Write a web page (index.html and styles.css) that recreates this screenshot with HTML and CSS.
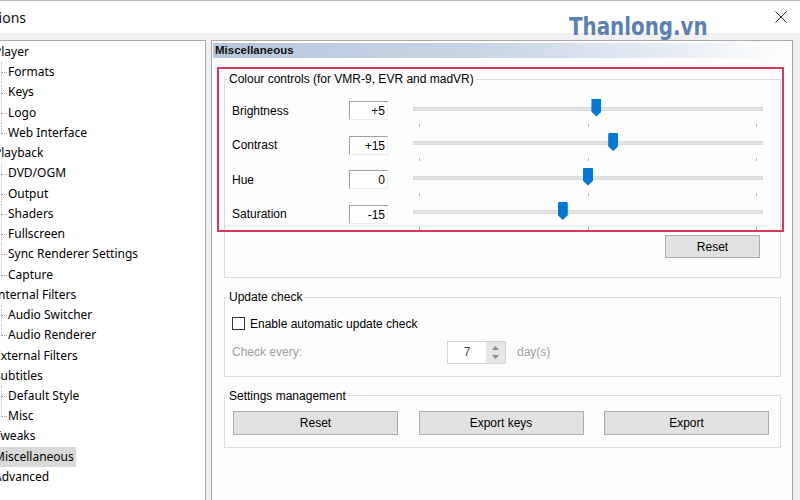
FILE: index.html
```html
<!DOCTYPE html>
<html lang="en">
<head>
<meta charset="utf-8">
<title>Options</title>
<link rel="stylesheet" href="styles.css">
</head>
<body>
<div class="window">
  <header class="titlebar">
    <span class="title">Options</span>
    <span class="logo">Thanlong.vn</span>
    <svg class="close" width="12" height="12" viewBox="0 0 12 12" aria-label="Close">
      <path d="M0.5 0.5 L11.5 11.5 M11.5 0.5 L0.5 11.5" stroke="#222" stroke-width="1" fill="none"/>
    </svg>
  </header>

  <div class="main">
    <nav class="tree">
      <div class="item top"><span class="txt">Player</span></div>
      <div class="item child"><span class="txt">Formats</span></div>
      <div class="item child"><span class="txt">Keys</span></div>
      <div class="item child"><span class="txt">Logo</span></div>
      <div class="item child last"><span class="txt">Web Interface</span></div>
      <div class="item top"><span class="txt">Playback</span></div>
      <div class="item child"><span class="txt">DVD/OGM</span></div>
      <div class="item child"><span class="txt">Output</span></div>
      <div class="item child"><span class="txt">Shaders</span></div>
      <div class="item child"><span class="txt">Fullscreen</span></div>
      <div class="item child"><span class="txt">Sync Renderer Settings</span></div>
      <div class="item child last"><span class="txt">Capture</span></div>
      <div class="item top"><span class="txt">Internal Filters</span></div>
      <div class="item child"><span class="txt">Audio Switcher</span></div>
      <div class="item child last"><span class="txt">Audio Renderer</span></div>
      <div class="item top"><span class="txt">External Filters</span></div>
      <div class="item top"><span class="txt">Subtitles</span></div>
      <div class="item child"><span class="txt">Default Style</span></div>
      <div class="item child last"><span class="txt">Misc</span></div>
      <div class="item top"><span class="txt">Tweaks</span></div>
      <div class="item top selected"><span class="txt">Miscellaneous</span></div>
      <div class="item top"><span class="txt">Advanced</span></div>
    </nav>

    <section class="panel">
      <div class="panel-head">Miscellaneous</div>

      <fieldset class="group colour">
        <legend>Colour controls (for VMR-9, EVR and madVR)</legend>
        <div class="body">
          <div class="rows">
            <div class="row">
              <span class="lbl">Brightness</span>
              <span class="edit">+5</span>
              <div class="slider">
                <div class="track"><div class="range"><span class="thumb" style="left: 52.5%"></span></div></div>
                <div class="ticks"><i></i><i></i><i></i></div>
              </div>
            </div>
            <div class="row">
              <span class="lbl">Contrast</span>
              <span class="edit">+15</span>
              <div class="slider">
                <div class="track"><div class="range"><span class="thumb" style="left: 57.5%"></span></div></div>
                <div class="ticks"><i></i><i></i><i></i></div>
              </div>
            </div>
            <div class="row">
              <span class="lbl">Hue</span>
              <span class="edit">0</span>
              <div class="slider">
                <div class="track"><div class="range"><span class="thumb" style="left: 50%"></span></div></div>
                <div class="ticks"><i></i><i></i><i></i></div>
              </div>
            </div>
            <div class="row">
              <span class="lbl">Saturation</span>
              <span class="edit">-15</span>
              <div class="slider">
                <div class="track"><div class="range"><span class="thumb" style="left: 42.5%"></span></div></div>
                <div class="ticks"><i></i><i></i><i></i></div>
              </div>
            </div>
          </div>
          <div class="reset-row"><button class="btn small">Reset</button></div>
        </div>
      </fieldset>

      <fieldset class="group update">
        <legend>Update check</legend>
        <div class="body">
          <div class="check-row">
            <span class="checkbox"></span>
            <span>Enable automatic update check</span>
          </div>
          <div class="every-row">
            <span class="dim every">Check every:</span>
            <span class="spinner">
              <span class="spin-val">7</span>
              <span class="spin-btns">
                <svg width="7" height="4" viewBox="0 0 7 4"><path d="M0 4 L3.5 0 L7 4 Z" fill="#8a8a8a"/></svg>
                <svg width="7" height="4" viewBox="0 0 7 4"><path d="M0 0 L3.5 4 L7 0 Z" fill="#8a8a8a"/></svg>
              </span>
            </span>
            <span class="dim days">day(s)</span>
          </div>
        </div>
      </fieldset>

      <fieldset class="group settings">
        <legend>Settings management</legend>
        <div class="body">
          <div class="btn-grid">
            <button class="btn">Reset</button>
            <button class="btn">Export keys</button>
            <button class="btn">Export</button>
          </div>
        </div>
      </fieldset>

      <div class="highlight"></div>
    </section>
  </div>
</div>
</body>
</html>
```

FILE: styles.css
```css
* { box-sizing: border-box; }

html, body {
  margin: 0;
  padding: 0;
}

body {
  width: 800px;
  height: 500px;
  overflow: hidden;
  background: #f0f0f0;
  font-family: "Liberation Sans", Arial, sans-serif;
  font-size: 12px;
  color: #000;
}

.window {
  width: 800px;
  height: 500px;
  display: flex;
  flex-direction: column;
  border-top: 1px solid #b8b8b8;
}

/* ---------- title bar ---------- */
.titlebar {
  position: relative;
  height: 32px;
  flex: none;
  background: #fff;
  display: flex;
  align-items: center;
  justify-content: space-between;
  padding-right: 13px;
}

.title {
  font-family: "Noto Sans", "Open Sans", sans-serif;
  font-size: 14px;
  margin-left: -26px;
  color: #111;
}

.close { display: block; }

.logo {
  position: absolute;
  left: 569px;
  top: 12px;
  font-family: "Liberation Sans Narrow", "DejaVu Sans Condensed", "DejaVu Sans", sans-serif;
  font-stretch: condensed;
  font-weight: bold;
  font-size: 24px;
  line-height: 28px;
  letter-spacing: 0;
  color: #5a80b6;
  transform: scaleX(0.92);
  transform-origin: left center;
}

/* ---------- main area ---------- */
.main {
  flex: 1;
  display: flex;
  gap: 5px;
  padding-top: 7px;
  min-height: 0;
}

.tree {
  width: 206px;
  flex: none;
  background: #fff;
  border-top: 1px solid #a8a8a8;
  border-right: 1px solid #a8a8a8;
  padding-top: 1px;
  font-family: "Noto Sans", "Open Sans", sans-serif;
  font-size: 12px;
  color: #000;
  overflow: hidden;
}

.item {
  position: relative;
  height: 20.24px;
  line-height: 20.24px;
  white-space: nowrap;
}

.item.top .txt {
  display: inline-block;
  margin-left: -7px;
  padding: 0 2px 0 1px;
}

.item.selected .txt {
  background: #d9d9d9;
}

.item.child { padding-left: 8px; }

.item.child::before {
  content: "";
  position: absolute;
  left: 1px;
  top: 0;
  bottom: 0;
  border-left: 1px dotted #c4c4c4;
}

.item.child.last::before { bottom: 50%; }

.item.child::after {
  content: "";
  position: absolute;
  left: 1px;
  top: 50%;
  width: 6px;
  border-top: 1px dotted #a0a0a0;
}

/* ---------- right panel ---------- */
.panel {
  position: relative;
  width: 582px;
  flex: none;
  background: #fdfdfd;
  border: 1px solid #a8a8a8;
  border-bottom: none;
  padding-top: 2px;
  padding-left: 1px;
}

.panel-head {
  height: 15px;
  line-height: 15px;
  padding-left: 2px;
  font-size: 11.5px;
  font-weight: bold;
  color: #111;
  background: linear-gradient(to right, #b6c6db 0%, #c8d5e5 45%, #e2e9f2 75%, #ffffff 100%);
}

.group {
  border: 1px solid #dcdcdc;
  margin: 0 11px 0 11px;
  padding: 0;
  min-width: 0;
}

.group legend {
  font-size: 12px;
  line-height: 14px;
  padding: 0 2px;
  margin-left: 2px;
  color: #000;
}

.colour { margin-top: 14px; }
.colour .body { padding: 0 16px 19px 7px; }

.rows { padding-top: 7.25px; }

.row {
  height: 34.5px;
  display: flex;
  align-items: center;
}

.lbl { width: 117px; flex: none; }

.edit {
  width: 39px;
  height: 19px;
  line-height: 18px;
  flex: none;
  text-align: right;
  padding-right: 2px;
  border-top: 1px solid #a0a0a0;
  border-left: 1px solid #a0a0a0;
  border-right: 1px solid #ececec;
  border-bottom: 1px solid #ececec;
  background: #fff;
}

.slider {
  width: 350px;
  margin-left: 25px;
  align-self: flex-start;
  padding-top: 13.25px;
}

.track {
  height: 4px;
  background: #e4e4e4;
  border: 1px solid #dadada;
  padding: 0 6px;
}

.range {
  position: relative;
  height: 100%;
}

.thumb {
  position: absolute;
  top: -9px;
  width: 10px;
  height: 18px;
  margin-left: -5px;
  background: #0078d7;
  clip-path: polygon(10% 0, 90% 0, 100% 6%, 100% 74%, 50% 100%, 0 74%, 0 6%);
}

.ticks {
  display: flex;
  justify-content: space-between;
  padding: 0 6px;
  margin-top: 13px;
}

.ticks i {
  display: block;
  width: 1px;
  height: 3px;
  background: #b4b4b4;
}

.reset-row {
  display: flex;
  justify-content: flex-end;
  margin-top: 4px;
  padding-right: 4px;
}

.btn {
  font-family: "Liberation Sans", Arial, sans-serif;
  font-size: 12px;
  color: #000;
  background: #e1e1e1;
  border: 1px solid #adadad;
  border-radius: 0;
  height: 24px;
  padding: 0;
}

.btn.small { width: 95px; height: 23px; }

.update { margin-top: 12px; }
.update .body { padding: 9.5px 10px 12px 7px; }

.check-row {
  height: 20px;
  display: flex;
  align-items: center;
  gap: 5px;
}

.checkbox {
  width: 13px;
  height: 13px;
  border: 1px solid #333;
  background: #fff;
}

.every-row {
  margin-top: 7px;
  height: 23px;
  display: flex;
  align-items: center;
}

.dim { color: #a0a0a0; }

.every { width: 215px; }

.spinner {
  display: flex;
  height: 23px;
  border: 1px solid #d4d4d4;
  background: #fff;
}

.spin-val {
  width: 38px;
  text-align: center;
  line-height: 21px;
  color: #444;
}

.spin-btns {
  width: 19px;
  background: #e6e6e6;
  display: flex;
  flex-direction: column;
  align-items: center;
  justify-content: center;
  gap: 5px;
}

.spin-btns svg { display: block; }

.days { margin-left: 11px; }

.settings { margin-top: 12px; }
.settings .body { padding: 8px 10px 12px 8px; }

.btn-grid {
  display: grid;
  grid-template-columns: repeat(3, 165px);
  column-gap: 20.5px;
}

.highlight {
  position: absolute;
  left: 5px;
  top: 26px;
  width: 567px;
  height: 165px;
  border: 2px solid #d8365f;
  pointer-events: none;
}
```
